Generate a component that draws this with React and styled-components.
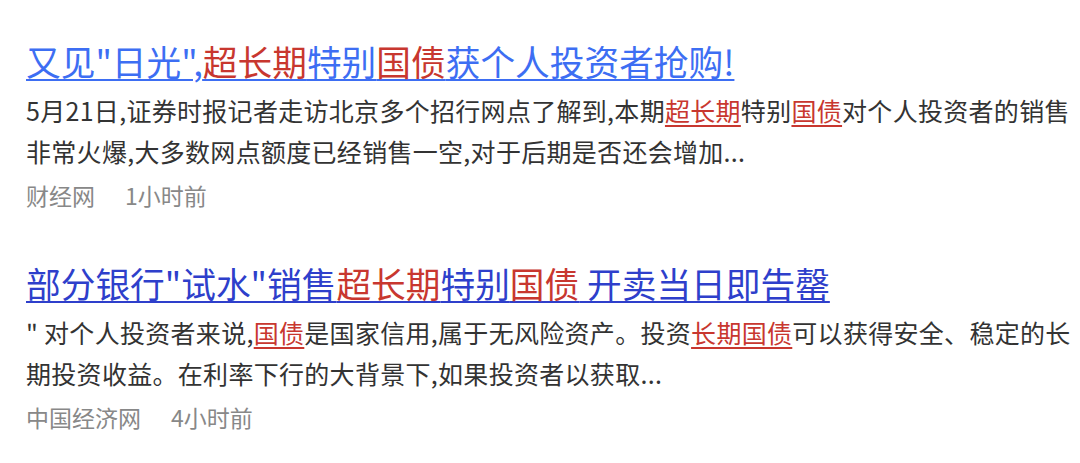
import styled, { createGlobalStyle } from "styled-components"

const GlobalStyle = createGlobalStyle`
  body {
    margin: 0;
    background: #ffffff;
    font-family: "Noto Sans CJK SC", "Noto Sans", sans-serif;
  }
`

const results = [
    {
        visited: false,
        title: [
            { t: '又见"日光",' },
            { t: "超长期", hl: true },
            { t: "特别" },
            { t: "国债", hl: true },
            { t: "获个人投资者抢购!" },
        ],
        summary: [
            { t: "5月21日,证券时报记者走访北京多个招行网点了解到,本期" },
            { t: "超长期", hl: true },
            { t: "特别" },
            { t: "国债", hl: true },
            { t: "对个人投资者的销售非常火爆,大多数网点额度已经销售一空,对于后期是否还会增加..." },
        ],
        source: "财经网",
        time: "1小时前",
    },
    {
        visited: true,
        title: [
            { t: '部分银行"试水"销售' },
            { t: "超长期", hl: true },
            { t: "特别" },
            { t: "国债", hl: true },
            { t: " 开卖当日即告罄" },
        ],
        summary: [
            { t: '" 对个人投资者来说,' },
            { t: "国债", hl: true },
            { t: "是国家信用,属于无风险资产。投资" },
            { t: "长期国债", hl: true },
            { t: "可以获得安全、稳定的长期投资收益。在利率下行的大背景下,如果投资者以获取..." },
        ],
        source: "中国经济网",
        time: "4小时前",
    },
]

export default function App() {
    return (
        <>
            <GlobalStyle />
            <ResultList>
                {results.map((item, i) => (
                    <ResultItem key={i}>
                        <Title href="#" $visited={item.visited}>
                            {item.title.map((part, j) =>
                                part.hl ? <Mark key={j}>{part.t}</Mark> : <span key={j}>{part.t}</span>
                            )}
                        </Title>
                        <Summary>
                            {item.summary.map((part, j) =>
                                part.hl ? <SummaryMark key={j}>{part.t}</SummaryMark> : <span key={j}>{part.t}</span>
                            )}
                        </Summary>
                        <Meta>
                            <span>{item.source}</span>
                            <span>{item.time}</span>
                        </Meta>
                    </ResultItem>
                ))}
            </ResultList>
        </>
    )
}

const ResultList = styled.div`
    display: flex;
    flex-direction: column;
    gap: 49px;
    padding: 38px 0 0 26px;
`

const ResultItem = styled.div`
    display: flex;
    flex-direction: column;
`

const Title = styled.a`
    display: block;
    font-size: 34.7px;
    line-height: 46px;
    color: ${(p) => (p.$visited ? "#2e3fcb" : "#3d6ef3")};
    text-decoration: underline;
    text-decoration-thickness: 2px;
    text-underline-offset: 3px;
    white-space: nowrap;
`

const Mark = styled.span`
    color: #c8372f;
`

const Summary = styled.div`
    margin-top: 6px;
    font-size: 25px;
    line-height: 41px;
    letter-spacing: 0.3px;
    color: #333333;
`

const SummaryMark = styled.span`
    color: #c8372f;
    text-decoration: underline;
    text-decoration-thickness: 1.5px;
    text-underline-offset: 4px;
`

const Meta = styled.div`
    display: flex;
    gap: 30px;
    margin-top: 7px;
    font-size: 23px;
    line-height: 32px;
    color: #888888;
`
